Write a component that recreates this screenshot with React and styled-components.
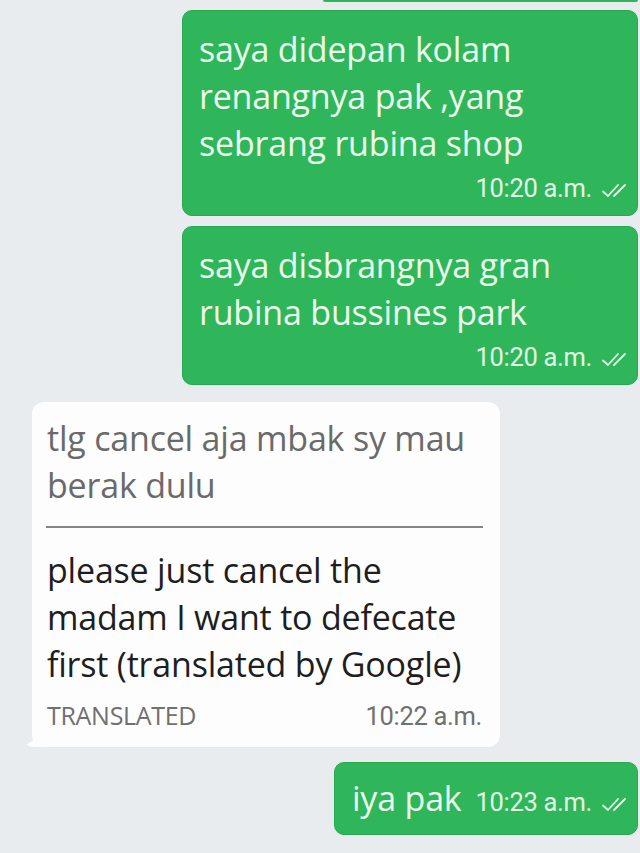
import React from "react";
import styled, { createGlobalStyle } from "styled-components";

const GlobalStyle = createGlobalStyle`
  html, body {
    margin: 0;
    padding: 0;
    background: #e8ecef;
    overflow: hidden;
  }
  body {
    font-family: "Open Sans", "Noto Sans", sans-serif;
    -webkit-font-smoothing: antialiased;
  }
`;

const Thread = styled.main`
  display: flex;
  flex-direction: column;
  width: 640px;
  height: 853px;
  box-sizing: border-box;
  padding-right: 2px;
`;

const Stub = styled.div`
  align-self: flex-end;
  width: 315px;
  height: 2px;
  background: #2fb65a;
  border-radius: 0 0 4px 4px;
`;

const Bubble = styled.div`
  align-self: flex-end;
  box-sizing: border-box;
  margin-top: ${(p) => p.$space}px;
  width: ${(p) => (p.$wide ? "456px" : "auto")};
  padding: ${(p) => (p.$inline ? "12px 5px 12px 17px" : "15px 5px 12px 16px")};
  background: #2fb65a;
  border: 1px solid #2aa752;
  border-radius: 10px;
  color: #ecfcec;
  display: flex;
  flex-direction: ${(p) => (p.$inline ? "row" : "column")};
  align-items: ${(p) => (p.$inline ? "baseline" : "stretch")};
  gap: ${(p) => (p.$inline ? "14px" : "0")};
`;

const Text = styled.div`
  font-size: 34px;
  line-height: 47px;
  letter-spacing: -0.2px;
  white-space: nowrap;
`;

const Meta = styled.div`
  display: flex;
  justify-content: flex-end;
  align-items: baseline;
  gap: 9px;
  margin-top: ${(p) => p.$top || 0}px;
  font-family: Roboto, "Open Sans", sans-serif;
  font-size: 25.5px;
  line-height: 30px;
  letter-spacing: -0.3px;
  color: #e3f7e6;
`;

const Ticks = styled.svg`
  width: 31px;
  height: 15px;
  align-self: center;
  margin-top: 5px;
`;

const Incoming = styled.div`
  position: relative;
  align-self: flex-start;
  box-sizing: border-box;
  margin: 17px 0 0 32px;
  width: 468px;
  padding: 13px 18px 16px 15px;
  background: #fdfdfd;
  border-radius: 12px;
  &::before {
    content: "";
    position: absolute;
    left: -9px;
    bottom: 0;
    width: 18px;
    height: 12px;
    background: #fdfdfd;
    border-radius: 0 0 0 10px;
    clip-path: polygon(0 100%, 100% 0, 100% 100%);
  }
`;

const Original = styled(Text)`
  color: #6a6a6a;
`;

const Translated = styled(Text)`
  color: #1e1e1e;
`;

const Divider = styled.hr`
  margin: 17px -1px 19px -1px;
  border: none;
  height: 2px;
  background: #858585;
`;

const Footer = styled.div`
  display: flex;
  justify-content: space-between;
  align-items: baseline;
  margin-top: 12px;
  color: #707070;
  font-size: 25px;
  line-height: 30px;
`;

const Label = styled.span`
  letter-spacing: -0.3px;
`;

const Time = styled.span`
  font-family: Roboto, "Open Sans", sans-serif;
  font-size: 25.5px;
  letter-spacing: -0.3px;
`;

const Check = () => (
  <Ticks viewBox="0 0 31 15" fill="none" stroke="#e3f7e6" strokeWidth="1.8" strokeLinecap="round" strokeLinejoin="round">
    <path d="M2 8.5 L7 13 L17 2" />
    <path d="M13 13 L24 2" />
  </Ticks>
);

const Outgoing = ({ lines, time, space }) => (
  <Bubble $wide $space={space}>
    {lines.map((l) => (
      <Text key={l}>{l}</Text>
    ))}
    <Meta $top={6}>
      <span>{time}</span>
      <Check />
    </Meta>
  </Bubble>
);

export default function App() {
  return (
    <>
      <GlobalStyle />
      <Thread>
        <Stub />
        <Outgoing
          space={8}
          time="10:20 a.m."
          lines={["saya didepan kolam", "renangnya pak ,yang", "sebrang rubina shop"]}
        />
        <Outgoing
          space={10}
          time="10:20 a.m."
          lines={["saya disbrangnya gran", "rubina bussines park"]}
        />
        <Incoming>
          <Original>tlg cancel aja mbak sy mau</Original>
          <Original>berak dulu</Original>
          <Divider />
          <Translated>please just cancel the</Translated>
          <Translated>madam I want to defecate</Translated>
          <Translated>first (translated by Google)</Translated>
          <Footer>
            <Label>TRANSLATED</Label>
            <Time>10:22 a.m.</Time>
          </Footer>
        </Incoming>
        <Bubble $inline $space={15}>
          <Text>iya pak</Text>
          <Meta>
            <span>10:23 a.m.</span>
            <Check />
          </Meta>
        </Bubble>
      </Thread>
    </>
  );
}
